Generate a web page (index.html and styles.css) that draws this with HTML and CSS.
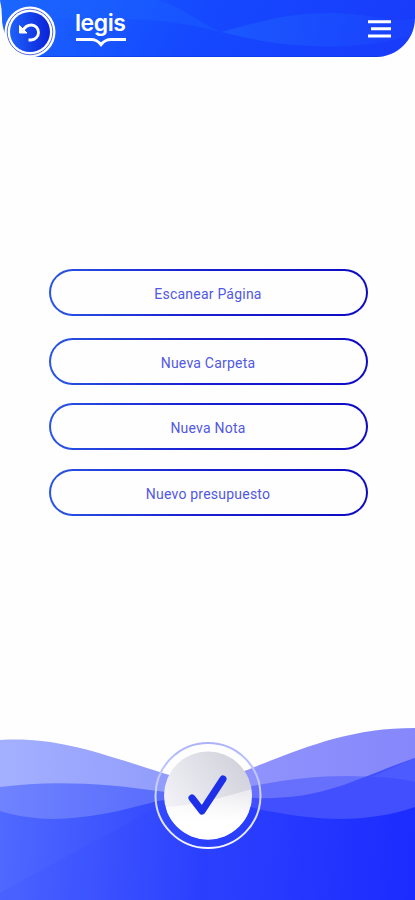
FILE: index.html
```html
<!DOCTYPE html>
<html lang="es">
<head>
    <meta charset="UTF-8">
    <meta name="viewport" content="width=device-width, initial-scale=1.0">
    <title>Legis</title>
    <link rel="stylesheet" href="styles.css">
</head>
<body>
    <div class="app">
        <!-- cabecera -->
        <header class="header">
            <svg class="header-bg" viewBox="0 0 415 58">
                <defs>
                    <linearGradient id="gHead" x1="0" x2="1" y1="0" y2="0.08">
                        <stop offset="0" stop-color="#1b66ff"/>
                        <stop offset="0.5" stop-color="#1549ff"/>
                        <stop offset="1" stop-color="#193cfb"/>
                    </linearGradient>
                    <linearGradient id="gHeadWave">
                        <stop offset="0" stop-color="#2068ff" stop-opacity=".5"/>
                        <stop offset="1" stop-color="#2068ff" stop-opacity=".1"/>
                    </linearGradient>
                    <clipPath id="cHead"><path d="M0 0H415V18C415 40 397 57 376 57H41C19 57 2 40 2 18Q2 8 0 0Z"/></clipPath>
                </defs>
                <g clip-path="url(#cHead)">
                    <rect width="415" height="58" fill="url(#gHead)"/>
                    <path d="M0 24C60 16 120 18 160 21Q195 25 221 32C196 20 178 5 158 0H0Z" fill="#1d68ff" opacity=".35"/>
                    <path d="M221 32C265 20 300 10 352 14C382 17 400 24 415 18V34C380 46 330 50 275 43Q245 38 221 32Z" fill="url(#gHeadWave)"/>
                    <path d="M0 56H415V58H0Z" fill="#0834d8" opacity=".5"/>
                </g>
            </svg>
            <button class="back" aria-label="Volver">
                <svg viewBox="0 0 52 52">
                    <defs>
                        <linearGradient id="gBack"><stop offset="0" stop-color="#1f62fa"/><stop offset="1" stop-color="#0a22d8"/></linearGradient>
                    </defs>
                    <circle cx="26" cy="26" r="25.5" fill="#fff"/>
                    <circle cx="26" cy="26" r="22.8" fill="none" stroke="#5a6ce4" stroke-width="1"/>
                    <circle cx="26" cy="26" r="20" fill="url(#gBack)"/>
                    <path d="M19 24.5C21 20.500 24 19 27.500 19C31.500 19 34.500 22.500 34.500 26.500C34.500 30.800 31 34 27 34H24.500" fill="none" stroke="#fff" stroke-width="2.800"/>
                    <path d="M15.500 19.500V27H23Z" fill="#fff" stroke="#fff" stroke-width="1" stroke-linejoin="round"/>
                </svg>
            </button>
            <svg class="logo" viewBox="0 0 54 42">
                <text class="logo-text" x="1" y="24.700" textLength="51">legis</text>
                <path d="M2 33.500H17C22 33.500 24 35 27 38.500C30 35 32 33.500 37 33.500H52" fill="none" stroke="#fff" stroke-width="3.200"/>
            </svg>
            <button class="menu" aria-label="Menú">
                <svg viewBox="0 0 24 20">
                    <path d="M1 2.700H24M4 9.700H24M1 17H24" stroke="#fff" stroke-width="3"/>
                </svg>
            </button>
        </header>

        <!-- opciones -->
        <main class="options">
            <button class="option first">Escanear Página</button>
            <button class="option">Nueva Carpeta</button>
            <button class="option">Nueva Nota</button>
            <button class="option">Nuevo presupuesto</button>
        </main>

        <!-- pie con olas -->
        <footer class="footer">
            <svg class="waves" viewBox="0 0 415 172">
                <defs>
                    <linearGradient id="gBase" gradientUnits="userSpaceOnUse" x1="0" y1="90" x2="415" y2="120">
                        <stop offset="0" stop-color="#5069ff"/>
                        <stop offset="0.5" stop-color="#2c41fe"/>
                        <stop offset="1" stop-color="#1c2bff"/>
                    </linearGradient>
                    <linearGradient id="gLight">
                        <stop offset="0" stop-color="#a4b0ff"/>
                        <stop offset="1" stop-color="#8d98fb"/>
                    </linearGradient>
                    <linearGradient id="gRight">
                        <stop offset="0" stop-color="#9296fc"/>
                        <stop offset="1" stop-color="#8587fb"/>
                    </linearGradient>
                    <linearGradient id="gMid">
                        <stop offset="0" stop-color="#6f83ff"/>
                        <stop offset="1" stop-color="#5366fb"/>
                    </linearGradient>
                </defs>
                <path d="M0 12C55 9 90 22 166 46L208 58V90H0Z" fill="url(#gLight)"/>
                <path d="M208 57C285 29 335 0 415 0V70H208Z" fill="url(#gRight)"/>
                <path d="M0 59C50 52 105 55 166 64L208 70V172H0Z" fill="url(#gMid)"/>
                <path d="M208 67Q225 63 258 57C315 46 365 45 415 54V172H208Z" fill="#6670fc"/>
                <path d="M208 66C315 80 340 56 415 30V172H208Z" fill="#414ffe"/>
                <path d="M0 83C50 98 95 90 158 73L208 66L258 81C315 93 365 96 415 79V172H0Z" fill="url(#gBase)"/>
                <path d="M371 49L415 30V54Q394 49 371 49Z" fill="#4c5bff"/>
                <path d="M0 165C40 143 105 108 166 74L208 70V172H0Z" fill="#1c31ff" opacity=".08"/>
            </svg>
            <button class="accept" aria-label="Aceptar">
                <svg viewBox="0 0 108 108">
                    <defs>
                        <linearGradient id="gDisc" x1="0" y1=".6" x2=".9" y2="0">
                            <stop offset="0" stop-color="#f6f6fb"/>
                            <stop offset="1" stop-color="#cbcbd6"/>
                        </linearGradient>
                        <linearGradient id="gShine" x1="0" y1="0" x2="0" y2="1">
                            <stop offset="0" stop-color="#fff" stop-opacity=".4"/>
                            <stop offset=".55" stop-color="#fff"/>
                        </linearGradient>
                        <linearGradient id="gRing" x1="0" y1="0" x2="0" y2="1">
                            <stop offset="0" stop-color="#abb2fb"/>
                            <stop offset="1" stop-color="#f4f6ff"/>
                        </linearGradient>
                        <clipPath id="cDisc"><circle cx="54" cy="53.500" r="44"/></clipPath>
                    </defs>
                    <circle cx="54" cy="53.500" r="52.500" fill="none" stroke="url(#gRing)" stroke-width="2"/>
                    <g clip-path="url(#cDisc)">
                        <rect width="108" height="108" fill="url(#gDisc)"/>
                        <path d="M0 66C40 64 70 55 108 44V108H0Z" fill="url(#gShine)"/>
                    </g>
                    <path d="M38 56L48 69L69 37" fill="none" stroke="#1d2fe9" stroke-width="7" stroke-linecap="round" stroke-linejoin="round"/>
                </svg>
            </button>
        </footer>
    </div>
</body>
</html>
```
FILE: styles.css
```css
*{
    box-sizing: border-box;
}
body{
    margin: 0;
    background-color: #fefefe;
    font-family: Roboto, "Liberation Sans", sans-serif;
}
button{
    padding: 0;
    border: 0;
    background: none;
    font-family: inherit;
}
svg{
    display: block;
}
.app{
    display: flex;
    flex-direction: column;
    width: 415px;
    height: 900px;
    overflow: hidden;
}
.header{
    display: flex;
    position: relative;
    height: 58px;
    padding: 6px 24px 0 4px;
}
/* fondo azul detrás de los botones */
.header-bg{
    position: absolute;
    top: 0;
    left: 0;
    width: 415px;
    height: 58px;
}
.back,.logo,.menu{
    position: relative;
}
.back{
    width: 52px;
    height: 52px;
}
.logo{
    width: 54px;
    height: 42px;
    margin-left: 18px;
    overflow: visible;
}
.logo-text{
    fill: #fff;
    font-family: Inter, sans-serif;
    font-size: 23px;
    font-weight: 600;
}
.menu{
    width: 24px;
    height: 20px;
    margin-top: 13px;
    margin-left: auto;
}
.options{
    display: flex;
    flex: 1;
    flex-direction: column;
    align-items: center;
    gap: 18.5px;
    padding: 211px 0 0 1px;
}
.option{
    width: 319px;
    height: 47px;
    border: 2px solid transparent;
    border-radius: 24px;
    background: linear-gradient(#fefefe,#fefefe) padding-box, linear-gradient(90deg,#2a55e4,#1a20d2 45%,#0d0bc4) border-box;
    color: #5058e4;
    font-size: 14px;
    letter-spacing: .22px;
    padding-top: 3px;
}
.first{
    margin-bottom: 3px;
}
.footer{
    display: grid;
    justify-items: center;
    height: 172px;
}
.waves,.accept{
    grid-area: 1 / 1;
}
.waves{
    width: 415px;
    height: 172px;
}
.accept{
    z-index: 1;
    width: 108px;
    height: 108px;
    margin-top: 14px;
}
```
